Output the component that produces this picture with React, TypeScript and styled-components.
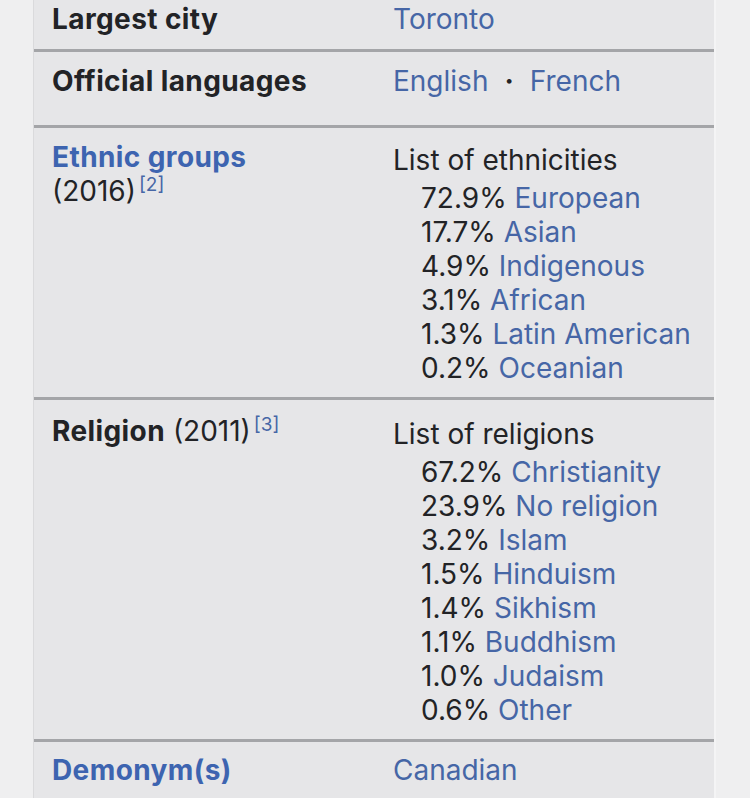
import * as React from 'react';
import styled, { createGlobalStyle } from 'styled-components';

const ink = '#222326';
const link = '#4666a6';
const boldLink = '#3d64b0';
const rule = '#a4a5a8';

const GlobalStyle = createGlobalStyle`
  body {
    margin: 0;
    background: #efeff0;
    font-family: Inter, 'Noto Sans', 'Liberation Sans', sans-serif;
    color: ${ink};
  }
`;

const Page = styled.div`
  padding-left: 33px;
  width: 683px;
`;

const Infobox = styled.div`
  background: #e6e6e8;
  border-left: 1px solid #dadadc;
  border-right: 2px solid #f4f4f5;
  font-size: 28px;
  line-height: 34px;
`;

const Row = styled.div<{ $top: number; $bottom: number; $first?: boolean }>`
  display: grid;
  grid-template-columns: 359px 1fr;
  padding: ${(p) => p.$top}px 0 ${(p) => p.$bottom}px;
  border-top: ${(p) => (p.$first ? 'none' : `3px solid ${rule}`)};
`;

const Label = styled.div`
  padding-left: 18px;
`;

const LabelText = styled.span<{ $link?: boolean }>`
  font-weight: 700;
  letter-spacing: 0.4px;
  color: ${(p) => (p.$link ? boldLink : ink)};
`;

const Value = styled.div`
  padding-right: 12px;
`;

const Link = styled.span`
  color: ${link};
`;

const Sup = styled.sup`
  font-size: 19px;
  line-height: 1;
  vertical-align: 10px;
  color: ${link};
  margin-left: 3px;
`;

const Dot = styled.span`
  display: inline-block;
  margin: 0 16px;
  font-weight: 700;
`;

const ListHeading = styled.div`
  padding-top: 3px;
`;

const List = styled.ul`
  list-style: none;
  margin: 4px 0 0;
  padding: 0 0 0 28px;
`;

const Item = styled.li`
  white-space: nowrap;
`;

type Share = { pct: string; name: string };

const ethnicities: Share[] = [
  { pct: '72.9%', name: 'European' },
  { pct: '17.7%', name: 'Asian' },
  { pct: '4.9%', name: 'Indigenous' },
  { pct: '3.1%', name: 'African' },
  { pct: '1.3%', name: 'Latin American' },
  { pct: '0.2%', name: 'Oceanian' },
];

const religions: Share[] = [
  { pct: '67.2%', name: 'Christianity' },
  { pct: '23.9%', name: 'No religion' },
  { pct: '3.2%', name: 'Islam' },
  { pct: '1.5%', name: 'Hinduism' },
  { pct: '1.4%', name: 'Sikhism' },
  { pct: '1.1%', name: 'Buddhism' },
  { pct: '1.0%', name: 'Judaism' },
  { pct: '0.6%', name: 'Other' },
];

const ShareList = ({ title, items }: { title: string; items: Share[] }) => (
  <Value>
    <ListHeading>{title}</ListHeading>
    <List>
      {items.map((item) => (
        <Item key={item.name}>
          {item.pct} <Link>{item.name}</Link>
        </Item>
      ))}
    </List>
  </Value>
);

const App = (): JSX.Element => (
  <>
    <GlobalStyle />
    <Page>
      <Infobox>
        <Row $first $top={2} $bottom={13}>
          <Label>
            <LabelText>Largest city</LabelText>
          </Label>
          <Value>
            <Link>Toronto</Link>
          </Value>
        </Row>
        <Row $top={12} $bottom={27}>
          <Label>
            <LabelText>Official languages</LabelText>
          </Label>
          <Value>
            <Link>English</Link>
            <Dot>·</Dot>
            <Link>French</Link>
          </Value>
        </Row>
        <Row $top={12} $bottom={12}>
          <Label>
            <LabelText $link>Ethnic groups</LabelText>
            <br />
            (2016)
            <Sup>[2]</Sup>
          </Label>
          <ShareList title="List of ethnicities" items={ethnicities} />
        </Row>
        <Row $top={14} $bottom={12}>
          <Label>
            <LabelText>Religion</LabelText> (2011)
            <Sup>[3]</Sup>
          </Label>
          <ShareList title="List of religions" items={religions} />
        </Row>
        <Row $top={11} $bottom={20}>
          <Label>
            <LabelText $link>Demonym(s)</LabelText>
          </Label>
          <Value>
            <Link>Canadian</Link>
          </Value>
        </Row>
      </Infobox>
    </Page>
  </>
);

export default App;
